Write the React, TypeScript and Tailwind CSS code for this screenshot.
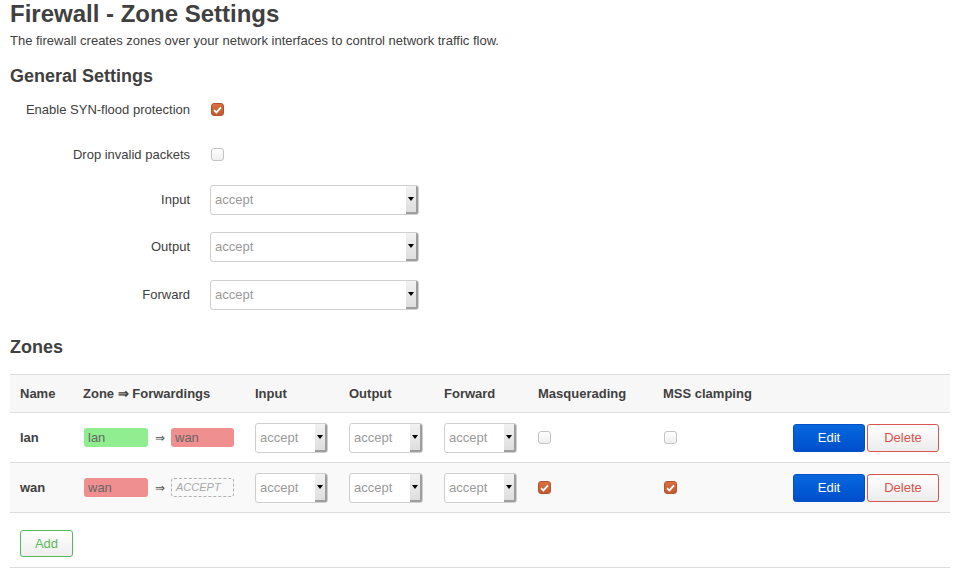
import React from 'react';

const font = { fontFamily: '"Liberation Sans", Arial, sans-serif' };

function Check({ checked }: { checked?: boolean }) {
  if (checked) {
    return (
      <span className="inline-flex w-[13px] h-[13px] items-center justify-center rounded-[3px] bg-gradient-to-b from-[#d8703f] to-[#c45a30] border border-[#b3532e]">
        <svg width="9" height="8" viewBox="0 0 9 8">
          <path d="M1 4.2 L3.4 6.4 L8 1.4" fill="none" stroke="#fff" strokeWidth="1.8" />
        </svg>
      </span>
    );
  }
  return (
    <span className="inline-block w-[13px] h-[13px] rounded-[3px] border border-[#c4c4c4] bg-gradient-to-b from-white to-[#efefef]" />
  );
}

function Select({ w }: { w: string }) {
  return (
    <div className={`${w} h-[30px] flex border border-[#cfcfcf] rounded-[3px] bg-white overflow-hidden`}>
      <div className="flex-1 flex items-center pl-[4px] text-[13px] text-[#9a9a9a]">accept</div>
      <div className="w-[12px] flex items-center justify-center bg-gradient-to-b from-[#f2f2f2] to-[#dedede] border-r-2 border-b-2 border-[#9e9e9e]">
        <span className="w-0 h-0 border-l-[3px] border-r-[3px] border-t-[4px] border-l-transparent border-r-transparent border-t-black" />
      </div>
    </div>
  );
}

const general = [
  { label: 'Enable SYN-flood protection', kind: 'check', checked: true, h: 'h-[45px]' },
  { label: 'Drop invalid packets', kind: 'check', checked: false, h: 'h-[45px]' },
  { label: 'Input', kind: 'select', h: 'h-[46px]' },
  { label: 'Output', kind: 'select', h: 'h-[48px]' },
  { label: 'Forward', kind: 'select', h: 'h-[48px]' },
];

const zones = [
  { name: 'lan', color: 'bg-[#90ee90]', fwd: 'wan', masq: false, mss: false, bg: 'bg-white' },
  { name: 'wan', color: 'bg-[#f08f8f]', fwd: null, masq: true, mss: true, bg: 'bg-[#f9f9f9]' },
];

const cols = 'grid grid-cols-[63px_172px_94px_95px_94px_125px_120px_1fr]';

export default function App() {
  return (
    <div className="px-[10px] text-[#404040] bg-white min-h-[569px]" style={font}>
      <h2 className="text-[24px] leading-[28px] font-bold">Firewall - Zone Settings</h2>
      <p className="mt-[5px] text-[13px] leading-[16px]">
        The firewall creates zones over your network interfaces to control network traffic flow.
      </p>

      {/* General Settings */}
      <h3 className="mt-[16px] text-[18px] leading-[22px] font-bold">General Settings</h3>
      <div>
        {general.map((row) => (
          <div key={row.label} className={`flex items-center ${row.h}`}>
            <div className="w-[180px] text-right text-[13px]">{row.label}</div>
            <div className="ml-[20px] flex items-center">
              {row.kind === 'check' ? (
                <span className="ml-[1px] flex"><Check checked={row.checked} /></span>
              ) : (
                <Select w="w-[209px]" />
              )}
            </div>
          </div>
        ))}
      </div>

      {/* Zones */}
      <h3 className="mt-[17px] text-[18px] leading-[22px] font-bold">Zones</h3>
      <div className="mt-[16px] w-[940px] border-t border-[#dddddd]">
        <div className={`${cols} h-[38px] items-center bg-[#f7f7f7] border-b border-[#dddddd] text-[13px] font-bold`}>
          <div className="pl-[10px]">Name</div>
          <div className="pl-[10px]">Zone ⇒ Forwardings</div>
          <div className="pl-[10px]">Input</div>
          <div className="pl-[10px]">Output</div>
          <div className="pl-[10px]">Forward</div>
          <div className="pl-[10px]">Masquerading</div>
          <div className="pl-[10px]">MSS clamping</div>
          <div />
        </div>
        {zones.map((z) => (
          <div key={z.name} className={`${cols} h-[50px] items-center border-b border-[#dddddd] ${z.bg}`}>
            <div className="pl-[10px] text-[13px] font-bold">{z.name}</div>
            <div className="pl-[11px] flex items-center text-[13px]">
              <span className={`w-[64px] h-[19px] rounded-[3px] ${z.color} text-[#666] pl-[4px] leading-[19px]`}>{z.name}</span>
              <span className="w-[23px] text-center text-[12px] text-[#555]">⇒</span>
              {z.fwd ? (
                <span className="w-[63px] h-[19px] rounded-[3px] bg-[#f08f8f] text-[#666] pl-[4px] leading-[19px]">{z.fwd}</span>
              ) : (
                <span className="w-[63px] h-[19px] rounded-[3px] border border-dashed border-[#b0b0b0] text-[#aaa] italic text-[11px] pl-[4px] leading-[17px]">ACCEPT</span>
              )}
            </div>
            <div className="pl-[10px]"><Select w="w-[73px]" /></div>
            <div className="pl-[10px]"><Select w="w-[74px]" /></div>
            <div className="pl-[10px]"><Select w="w-[73px]" /></div>
            <div className="pl-[10px] flex"><Check checked={z.masq} /></div>
            <div className="pl-[11px] flex"><Check checked={z.mss} /></div>
            <div className="flex justify-end gap-[2px] pr-[11px]">
              <button className="w-[72px] h-[28px] rounded-[3px] bg-gradient-to-b from-[#0868de] to-[#004ecb] border border-[#0050c8] text-white text-[13px]">
                Edit
              </button>
              <button className="w-[72px] h-[28px] rounded-[3px] bg-gradient-to-b from-white to-[#ececec] border border-[#d9534f] text-[#d9534f] text-[13px]">
                Delete
              </button>
            </div>
          </div>
        ))}
        <div className="pt-[17px] pl-[10px] pb-[10px] border-b border-[#dddddd]">
          <button className="w-[53px] h-[27px] rounded-[3px] bg-gradient-to-b from-white to-[#eeeeee] border border-[#5cb85c] text-[#5cb85c] text-[13px]">
            Add
          </button>
        </div>
      </div>
    </div>
  );
}
